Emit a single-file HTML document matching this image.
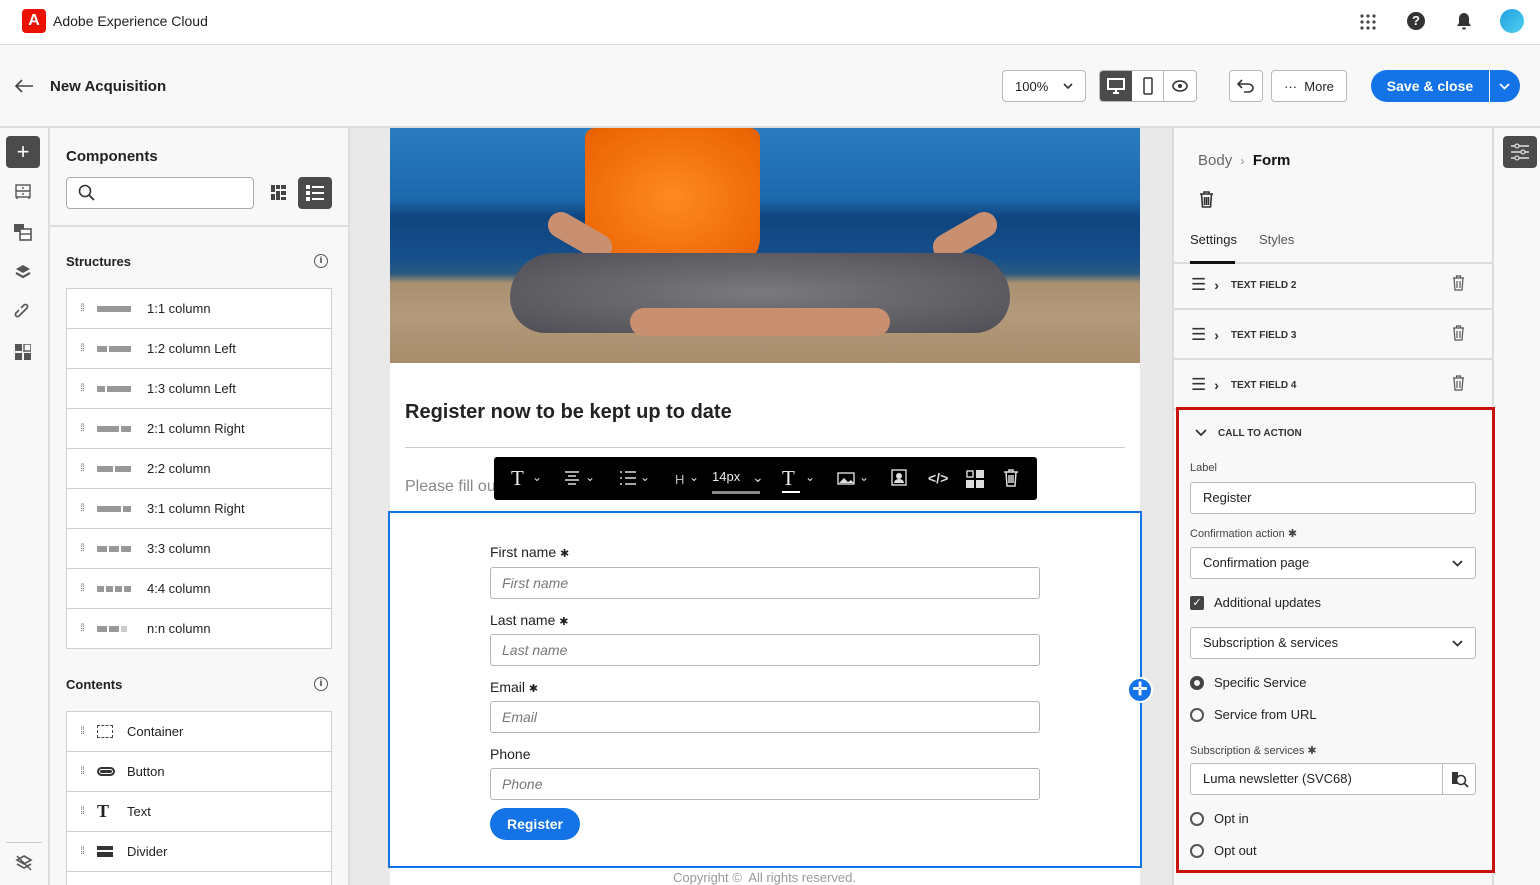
<!DOCTYPE html>
<html style="overflow:hidden;height:885px"><head><meta charset="utf-8"><style>
*{box-sizing:border-box;margin:0;padding:0}
body{width:1540px;height:885px;overflow:hidden;font-family:"Liberation Sans",sans-serif;color:#222;background:#f8f8f8;position:relative;font-size:13px}
.a{position:absolute}
.btn{position:absolute;border:1px solid #b8b8b8;border-radius:4px;background:#fff;display:flex;align-items:center;justify-content:center}
.row{position:absolute;left:66px;width:266px;height:40px;background:#fff;border:1px solid #cfcfcf;border-top:none;display:flex;align-items:center;font-size:13px}
.row .g{width:30px;text-align:center;color:#666;font-size:10px;letter-spacing:-1px}
.row .p{width:50px;display:flex;gap:2px}
.row .p i{display:block;height:6px;background:#999}
.inp{position:absolute;left:490px;width:550px;height:32px;border:1px solid #b5b5b5;border-radius:3px;background:#fff;font-style:italic;color:#777;font-size:14px;padding:7px 11px}
.lbl{position:absolute;left:490px;font-size:14px;color:#222}
.tf{position:absolute;left:1174px;width:318px;height:48px;border-bottom:2px solid #ddd;display:flex;align-items:center;font-size:10px;font-weight:bold;color:#333}
.field{position:absolute;left:1190px;width:286px;height:32px;border:1px solid #bbb;border-radius:3px;background:#fff;font-size:13px;padding:7px 12px;color:#222}
.rad{position:absolute;left:1190px;width:14px;height:14px;border:2px solid #555;border-radius:50%}
.rt{position:absolute;left:1214px;font-size:13px}
.small{position:absolute;left:1190px;font-size:11px;color:#444}
</style></head><body>
<div class="a" style="left:0;top:0;width:1540px;height:45px;background:#fff;border-bottom:1px solid #ddd"></div>
<div class="a" style="left:22px;top:9px;width:24px;height:24px;background:#eb1000;border-radius:4px;color:#fff;font-weight:bold;font-size:16px;text-align:center;line-height:24px">A</div>
<div class="a" style="left:53px;top:13px;font-size:14px">Adobe Experience Cloud</div>
<svg class="a" style="left:1359px;top:13px" width="18" height="18"><g fill="#444"><circle cx="3" cy="3" r="1.6"/><circle cx="9" cy="3" r="1.6"/><circle cx="15" cy="3" r="1.6"/><circle cx="3" cy="9" r="1.6"/><circle cx="9" cy="9" r="1.6"/><circle cx="15" cy="9" r="1.6"/><circle cx="3" cy="15" r="1.6"/><circle cx="9" cy="15" r="1.6"/><circle cx="15" cy="15" r="1.6"/></g></svg>
<div class="a" style="left:1407px;top:12px;width:18px;height:18px;border-radius:50%;background:#333;color:#fff;font-size:13px;font-weight:bold;text-align:center;line-height:18px">?</div>
<svg class="a" style="left:1455px;top:12px" width="18" height="18"><path d="M9 1c-3 0-5 2.5-5 5.5V11L2 14h14l-2-3V6.5C14 3.5 12 1 9 1zM7 15.5a2 2 0 0 0 4 0z" fill="#333"/></svg>
<div class="a" style="left:1500px;top:9px;width:24px;height:24px;border-radius:50%;background:linear-gradient(135deg,#1fa0e0,#4fd0f0)"></div>
<div class="a" style="left:0;top:126px;width:1540px;height:2px;background:#ddd"></div>
<svg class="a" style="left:14px;top:78px" width="20" height="16"><path d="M19 8H2M8 2L2 8l6 6" stroke="#444" stroke-width="1.6" fill="none"/></svg>
<div class="a" style="left:50px;top:78px;font-size:15px;font-weight:bold;color:#222">New Acquisition</div>
<div class="btn" style="left:1002px;top:70px;width:84px;height:32px;justify-content:flex-start;padding-left:12px;font-size:13px">100%<svg style="position:absolute;right:12px;top:12px" width="10" height="7"><path d="M1 1l4 4 4-4" stroke="#333" stroke-width="1.6" fill="none"/></svg></div>
<div class="btn" style="left:1099px;top:70px;width:98px;height:32px;justify-content:flex-start;overflow:hidden">
<div style="width:32px;height:32px;background:#4b4b4b;display:flex;align-items:center;justify-content:center"><svg width="18" height="16"><rect x="1" y="1" width="16" height="10" fill="none" stroke="#fff" stroke-width="2"/><path d="M6 15h6M9 11v4" stroke="#fff" stroke-width="2"/></svg></div>
<div style="width:32px;height:32px;border-right:1px solid #b8b8b8;display:flex;align-items:center;justify-content:center"><svg width="10" height="18"><rect x="1" y="1" width="8" height="16" rx="1" fill="none" stroke="#333" stroke-width="1.5"/></svg></div>
<div style="width:32px;display:flex;align-items:center;justify-content:center"><svg width="16" height="12"><ellipse cx="8" cy="6" rx="7" ry="5" fill="none" stroke="#333" stroke-width="1.6"/><circle cx="8" cy="6" r="2" fill="#333"/></svg></div></div>
<div class="btn" style="left:1229px;top:70px;width:34px;height:32px"><svg width="18" height="14"><path d="M5 1L1 5l4 4M1 5h10a5 4 0 0 1 0 8H7" stroke="#333" stroke-width="1.6" fill="none"/></svg></div>
<div class="btn" style="left:1271px;top:70px;width:76px;height:32px;font-size:13px">&middot;&middot;&middot;&nbsp; More</div>
<div class="a" style="left:1371px;top:70px;width:118px;height:32px;border-radius:16px 0 0 16px;background:#1473e6;color:#fff;font-size:14px;font-weight:bold;text-align:center;line-height:32px">Save &amp; close</div>
<div class="a" style="left:1490px;top:70px;width:30px;height:32px;border-radius:0 16px 16px 0;background:#1473e6"><svg style="position:absolute;left:9px;top:13px" width="11" height="7"><path d="M1 1l4.5 4.5L10 1" stroke="#fff" stroke-width="1.8" fill="none"/></svg></div>
<div class="a" style="left:48px;top:128px;width:2px;height:757px;background:#ddd"></div>
<div class="a" style="left:6px;top:136px;width:34px;height:32px;background:#4b4b4b;border-radius:4px;color:#fff;font-size:22px;text-align:center;line-height:31px">+</div>
<svg class="a" style="left:14px;top:183px" width="18" height="18"><rect x="2" y="2" width="14" height="12" fill="none" stroke="#555" stroke-width="1.4"/><path d="M2 8h14M9 4v2M9 10v2M3 14v2M15 14v2" stroke="#555" stroke-width="1.4"/></svg>
<svg class="a" style="left:13px;top:223px" width="20" height="18"><rect x="1" y="1" width="10" height="8" fill="#555"/><rect x="7" y="6" width="11" height="11" fill="#fff" stroke="#555" stroke-width="1.6"/><path d="M7 11h11" stroke="#555" stroke-width="1.4"/></svg>
<svg class="a" style="left:14px;top:263px" width="18" height="18"><path d="M9 2l7 4-7 4-7-4z" fill="#555"/><path d="M2 10l7 4 7-4" stroke="#555" stroke-width="2.2" fill="none"/></svg>
<svg class="a" style="left:14px;top:303px" width="18" height="18"><path d="M8 10l-3 3a2 2 0 0 1-3-3l3-3M10 8l3-3a2 2 0 0 0-3-3L7 5M7 11l4-4" stroke="#555" stroke-width="1.6" fill="none"/></svg>
<svg class="a" style="left:15px;top:344px" width="16" height="16"><rect x="0" y="0" width="7" height="7" fill="#555"/><rect x="9" y="0" width="7" height="7" fill="none" stroke="#555" stroke-width="1.4"/><rect x="0" y="9" width="7" height="7" fill="#555"/><rect x="9" y="9" width="7" height="7" fill="#555"/></svg>
<div class="a" style="left:6px;top:842px;width:36px;height:1px;background:#ccc"></div>
<svg class="a" style="left:15px;top:854px" width="18" height="18"><path d="M9 2l7 4-7 4-7-4z M2 10l7 4 7-4" stroke="#555" stroke-width="1.6" fill="none"/><path d="M2 2l14 14" stroke="#555" stroke-width="1.4"/></svg>
<div class="a" style="left:348px;top:128px;width:2px;height:757px;background:#ddd"></div>
<div class="a" style="left:66px;top:148px;font-size:15px;font-weight:bold">Components</div>
<div class="a" style="left:66px;top:177px;width:188px;height:32px;border:1px solid #aaa;border-radius:4px;background:#fff"></div>
<svg class="a" style="left:78px;top:184px" width="18" height="18"><circle cx="7" cy="7" r="5.5" fill="none" stroke="#333" stroke-width="1.6"/><path d="M11 11l5 5" stroke="#333" stroke-width="1.8"/></svg>
<svg class="a" style="left:270px;top:184px" width="18" height="18"><g fill="#444"><rect x="1" y="1" width="4" height="7"/><rect x="6" y="1" width="4" height="4"/><rect x="11" y="1" width="5" height="4"/><rect x="1" y="10" width="4" height="6"/><rect x="6" y="7" width="4" height="9"/><rect x="11" y="7" width="5" height="4"/><rect x="11" y="13" width="5" height="3"/></g></svg>
<div class="a" style="left:298px;top:177px;width:34px;height:32px;background:#4b4b4b;border-radius:4px"></div>
<svg class="a" style="left:306px;top:185px" width="18" height="16"><g fill="#fff"><rect x="0" y="0" width="4" height="4"/><rect x="0" y="6" width="4" height="4"/><rect x="0" y="12" width="4" height="4"/><rect x="6" y="1" width="12" height="2"/><rect x="6" y="7" width="12" height="2"/><rect x="6" y="13" width="12" height="2"/></g></svg>
<div class="a" style="left:50px;top:225px;width:298px;height:2px;background:#ddd"></div>
<div class="a" style="left:66px;top:254px;font-size:13px;font-weight:bold">Structures</div>
<div class="a" style="left:314px;top:254px;width:14px;height:14px;border:1.5px solid #555;border-radius:50%;font-size:9px;text-align:center;line-height:11px;font-weight:bold">i</div>
<div class="a" style="left:66px;top:288px;width:266px;height:1px;background:#cfcfcf"></div>
<div class="row" style="top:289px"><span class="g">⁞⁞</span><span class="p"><i style="width:34px"></i></span><span>1:1 column</span></div>
<div class="row" style="top:329px"><span class="g">⁞⁞</span><span class="p"><i style="width:10px"></i><i style="width:22px"></i></span><span>1:2 column Left</span></div>
<div class="row" style="top:369px"><span class="g">⁞⁞</span><span class="p"><i style="width:8px"></i><i style="width:24px"></i></span><span>1:3 column Left</span></div>
<div class="row" style="top:409px"><span class="g">⁞⁞</span><span class="p"><i style="width:22px"></i><i style="width:10px"></i></span><span>2:1 column Right</span></div>
<div class="row" style="top:449px"><span class="g">⁞⁞</span><span class="p"><i style="width:16px"></i><i style="width:16px"></i></span><span>2:2 column</span></div>
<div class="row" style="top:489px"><span class="g">⁞⁞</span><span class="p"><i style="width:24px"></i><i style="width:8px"></i></span><span>3:1 column Right</span></div>
<div class="row" style="top:529px"><span class="g">⁞⁞</span><span class="p"><i style="width:10px"></i><i style="width:10px"></i><i style="width:10px"></i></span><span>3:3 column</span></div>
<div class="row" style="top:569px"><span class="g">⁞⁞</span><span class="p"><i style="width:7px"></i><i style="width:7px"></i><i style="width:7px"></i><i style="width:7px"></i></span><span>4:4 column</span></div>
<div class="row" style="top:609px"><span class="g">⁞⁞</span><span class="p"><i style="width:10px"></i><i style="width:10px"></i><i style="width:6px;background:#ccc"></i></span><span>n:n column</span></div>
<div class="a" style="left:66px;top:677px;font-size:13px;font-weight:bold">Contents</div>
<div class="a" style="left:314px;top:677px;width:14px;height:14px;border:1.5px solid #555;border-radius:50%;font-size:9px;text-align:center;line-height:11px;font-weight:bold">i</div>
<div class="a" style="left:66px;top:711px;width:266px;height:1px;background:#cfcfcf"></div>
<div class="row" style="top:712px"><span class="g">⁞⁞</span><span style="width:30px"><i style="display:block;width:16px;height:13px;border:1px dashed #444"></i></span><span>Container</span></div>
<div class="row" style="top:752px"><span class="g">⁞⁞</span><span style="width:30px"><i style="display:block;width:18px;height:9px;border:2px solid #333;border-radius:5px;background:#333;box-shadow:inset 0 0 0 1px #fff"></i></span><span>Button</span></div>
<div class="row" style="top:792px"><span class="g">⁞⁞</span><span style="width:30px;font-family:'Liberation Serif',serif;font-size:18px;font-weight:bold">T</span><span>Text</span></div>
<div class="row" style="top:832px"><span class="g">⁞⁞</span><span style="width:30px"><i style="display:block;width:16px;height:4px;background:#333;margin-bottom:2px"></i><i style="display:block;width:16px;height:5px;background:#333"></i></span><span>Divider</span></div>
<div class="row" style="top:872px;height:13px;border-bottom:none"></div>
<div class="a" style="left:350px;top:128px;width:822px;height:757px;background:#e9e9e9"></div>
<div class="a" style="left:390px;top:128px;width:750px;height:757px;background:#fff"></div>
<div class="a" style="left:390px;top:128px;width:750px;height:235px;overflow:hidden;background:linear-gradient(#2a7cc0 0%,#1d68ac 30%,#10447e 38%,#154f8c 55%,#2a5a80 62%,#a89070 66%,#b49a7a 80%,#a88c6c 100%)">
<div class="a" style="left:195px;top:0;width:175px;height:140px;background:radial-gradient(ellipse at 50% 50%,#ff8a20,#e86000);border-radius:10px 10px 30px 30px"></div>
<div class="a" style="left:155px;top:95px;width:70px;height:26px;background:#c89070;border-radius:14px;transform:rotate(30deg)"></div>
<div class="a" style="left:540px;top:95px;width:70px;height:26px;background:#c89070;border-radius:14px;transform:rotate(-30deg)"></div>
<div class="a" style="left:120px;top:125px;width:500px;height:80px;background:radial-gradient(ellipse,#7a7a7c,#4e4e55);border-radius:50px 50px 40px 40px"></div>
<div class="a" style="left:240px;top:180px;width:260px;height:28px;background:#c89070;border-radius:14px"></div>
</div>
<div class="a" style="left:405px;top:401px;font-size:20px;font-weight:bold;color:#222">Register now to be kept up to date</div>
<div class="a" style="left:405px;top:447px;width:720px;height:1px;background:#ccc"></div>
<div class="a" style="left:405px;top:478px;font-size:16px;color:#888">Please fill ou</div>
<div class="a" style="left:494px;top:457px;width:543px;height:43px;background:#000;border-radius:3px;color:#ddd;font-size:12px">
<span class="a" style="left:17px;top:9px;font-family:'Liberation Serif',serif;font-size:21px;color:#eee">T</span><span class="a" style="left:38px;top:13px">&#8964;</span>
<svg class="a" style="left:70px;top:14px" width="16" height="14"><path d="M1 1h14M4 5h8M1 9h14M4 13h8" stroke="#ddd" stroke-width="1.6"/></svg><span class="a" style="left:91px;top:13px">&#8964;</span>
<svg class="a" style="left:126px;top:14px" width="16" height="14"><path d="M0 1h2M0 7h2M0 13h2M5 1h11M5 7h11M5 13h11" stroke="#ddd" stroke-width="1.6"/></svg><span class="a" style="left:146px;top:13px">&#8964;</span>
<span class="a" style="left:181px;top:15px;font-size:13px;color:#bbb">H</span><span class="a" style="left:195px;top:13px">&#8964;</span>
<span class="a" style="left:218px;top:12px;font-size:13px;color:#eee">14px</span><div class="a" style="left:218px;top:34px;width:48px;height:3px;background:#888"></div><span class="a" style="left:258px;top:12px;font-size:14px">&#8964;</span>
<span class="a" style="left:288px;top:9px;font-family:'Liberation Serif',serif;font-size:21px;color:#eee">T</span><div class="a" style="left:288px;top:34px;width:18px;height:2px;background:#fff"></div><span class="a" style="left:311px;top:13px">&#8964;</span>
<svg class="a" style="left:343px;top:15px" width="18" height="13"><rect x="1" y="1" width="16" height="11" fill="none" stroke="#ddd" stroke-width="1.4"/><path d="M2 11l5-5 4 4 3-2 3 3z" fill="#ddd"/></svg><span class="a" style="left:365px;top:13px">&#8964;</span>
<svg class="a" style="left:397px;top:12px" width="16" height="18"><rect x="1" y="1" width="14" height="15" fill="none" stroke="#ddd" stroke-width="1.4"/><circle cx="8" cy="7" r="3" fill="#ddd"/><path d="M3 14a5 4 0 0 1 10 0z" fill="#ddd"/></svg>
<span class="a" style="left:434px;top:13px;font-size:14px;font-weight:bold">&lt;/&gt;</span>
<svg class="a" style="left:472px;top:13px" width="18" height="18"><rect x="1" y="1" width="6" height="6" fill="none" stroke="#ddd" stroke-width="1.4"/><rect x="10" y="0" width="8" height="8" fill="#ddd"/><rect x="0" y="10" width="8" height="8" fill="#ddd"/><rect x="10" y="10" width="8" height="8" fill="#ddd"/></svg>
<svg class="a" style="left:509px;top:12px" width="16" height="18"><path d="M1 3h14M6 3V1h4v2M3 3l1 14h8l1-14M6 6v8M8 6v8M10 6v8" stroke="#ddd" stroke-width="1.5" fill="none"/></svg>
</div>
<div class="a" style="left:388px;top:511px;width:754px;height:357px;border:2px solid #1473e6"></div>
<div class="lbl" style="top:544px">First name <span style="font-size:11px">✱</span></div>
<div class="inp" style="top:567px">First name</div>
<div class="lbl" style="top:612px">Last name <span style="font-size:11px">✱</span></div>
<div class="inp" style="top:634px">Last name</div>
<div class="lbl" style="top:679px">Email <span style="font-size:11px">✱</span></div>
<div class="inp" style="top:701px">Email</div>
<div class="lbl" style="top:746px">Phone</div>
<div class="inp" style="top:768px">Phone</div>
<div class="a" style="left:490px;top:808px;width:90px;height:32px;border-radius:16px;background:#1473e6;color:#fff;font-size:14px;font-weight:bold;text-align:center;line-height:32px">Register</div>
<div class="a" style="left:1127px;top:677px;width:26px;height:26px;border-radius:50%;background:#1473e6;border:2px solid #fff;color:#fff;text-align:center;font-size:18px;line-height:21px;font-weight:bold">✛</div>
<div class="a" style="left:673px;top:870px;font-size:13px;color:#999">Copyright ©&nbsp; All rights reserved.</div>
<div class="a" style="left:1172px;top:128px;width:2px;height:757px;background:#ddd"></div>
<div class="a" style="left:1492px;top:128px;width:2px;height:757px;background:#ddd"></div>
<div class="a" style="left:1494px;top:128px;width:46px;height:757px;background:#f8f8f8"></div>
<div class="a" style="left:1503px;top:136px;width:34px;height:32px;background:#4b4b4b;border-radius:4px"></div>
<svg class="a" style="left:1510px;top:143px" width="20" height="18"><path d="M1 3h18M1 9h18M1 15h18" stroke="#fff" stroke-width="1.2"/><circle cx="7" cy="3" r="2" fill="#4b4b4b" stroke="#fff"/><circle cx="13" cy="9" r="2" fill="#4b4b4b" stroke="#fff"/><circle cx="7" cy="15" r="2" fill="#4b4b4b" stroke="#fff"/></svg>
<div class="a" style="left:1198px;top:152px;font-size:15px;color:#666">Body&nbsp; <span style="font-size:12px;color:#888">&#8250;</span>&nbsp; <b style="color:#111">Form</b></div>
<svg class="a" style="left:1199px;top:191px" width="15" height="17"><path d="M1 3h13M5 3V1h5v2M2.5 3l1 13h8l1-13M5.5 6v8M7.5 6v8M9.5 6v8" stroke="#333" stroke-width="1.6" fill="none"/></svg>
<div class="a" style="left:1190px;top:232px;font-size:13px;color:#222">Settings</div>
<div class="a" style="left:1259px;top:232px;font-size:13px;color:#555">Styles</div>
<div class="a" style="left:1174px;top:262px;width:318px;height:2px;background:#ddd"></div>
<div class="a" style="left:1190px;top:261px;width:45px;height:3px;background:#111"></div>
<div class="tf" style="top:262px"><span style="margin-left:17px;font-size:17px;font-weight:normal">☰</span><span style="margin-left:8px;font-size:14px">&#8250;</span><span style="margin-left:12px">TEXT FIELD 2</span></div>
<div class="tf" style="top:312px"><span style="margin-left:17px;font-size:17px;font-weight:normal">☰</span><span style="margin-left:8px;font-size:14px">&#8250;</span><span style="margin-left:12px">TEXT FIELD 3</span></div>
<div class="tf" style="top:362px"><span style="margin-left:17px;font-size:17px;font-weight:normal">☰</span><span style="margin-left:8px;font-size:14px">&#8250;</span><span style="margin-left:12px">TEXT FIELD 4</span></div>
<svg class="a" style="left:1452px;top:275px" width="13" height="16"><path d="M1 3h11M4.5 3V1h4v2M2 3l1 12h7l1-12M5 6v7M8 6v7" stroke="#555" stroke-width="1.2" fill="none"/></svg>
<svg class="a" style="left:1452px;top:325px" width="13" height="16"><path d="M1 3h11M4.5 3V1h4v2M2 3l1 12h7l1-12M5 6v7M8 6v7" stroke="#555" stroke-width="1.2" fill="none"/></svg>
<svg class="a" style="left:1452px;top:375px" width="13" height="16"><path d="M1 3h11M4.5 3V1h4v2M2 3l1 12h7l1-12M5 6v7M8 6v7" stroke="#555" stroke-width="1.2" fill="none"/></svg>
<div class="a" style="left:1176px;top:407px;width:319px;height:466px;border:3px solid #c8100c"></div>
<svg class="a" style="left:1195px;top:429px" width="12" height="8"><path d="M1 1l5 5 5-5" stroke="#333" stroke-width="1.8" fill="none"/></svg>
<div class="a" style="left:1218px;top:428px;font-size:10px;font-weight:bold;color:#333">CALL TO ACTION</div>
<div class="small" style="top:462px">Label</div>
<div class="field" style="top:482px">Register</div>
<div class="small" style="top:527px">Confirmation action ✱</div>
<div class="field" style="top:547px">Confirmation page<svg style="position:absolute;right:12px;top:12px" width="11" height="7"><path d="M1 1l4.5 4.5L10 1" stroke="#333" stroke-width="1.8" fill="none"/></svg></div>
<div class="a" style="left:1190px;top:596px;width:14px;height:14px;background:#444;border-radius:2px;color:#fff;font-size:11px;text-align:center;line-height:14px">✓</div>
<div class="rt" style="top:595px">Additional updates</div>
<div class="field" style="top:627px">Subscription &amp; services<svg style="position:absolute;right:12px;top:12px" width="11" height="7"><path d="M1 1l4.5 4.5L10 1" stroke="#333" stroke-width="1.8" fill="none"/></svg></div>
<div class="rad" style="top:676px;border-width:4px;border-color:#444"></div>
<div class="rt" style="top:675px">Specific Service</div>
<div class="rad" style="top:708px"></div>
<div class="rt" style="top:707px">Service from URL</div>
<div class="small" style="top:744px">Subscription &amp; services ✱</div>
<div class="field" style="top:763px">Luma newsletter (SVC68)<span style="position:absolute;right:0;top:0;width:33px;height:30px;border-left:1px solid #bbb"></span></div>
<svg class="a" style="left:1451px;top:770px" width="18" height="18"><path d="M1 2h6v12H1z" fill="#333"/><circle cx="10" cy="10" r="4.5" fill="#fff" stroke="#333" stroke-width="1.6"/><path d="M13 13l4 4" stroke="#333" stroke-width="1.8"/></svg>
<div class="rad" style="top:812px"></div>
<div class="rt" style="top:811px">Opt in</div>
<div class="rad" style="top:844px"></div>
<div class="rt" style="top:843px">Opt out</div>
</body></html>
